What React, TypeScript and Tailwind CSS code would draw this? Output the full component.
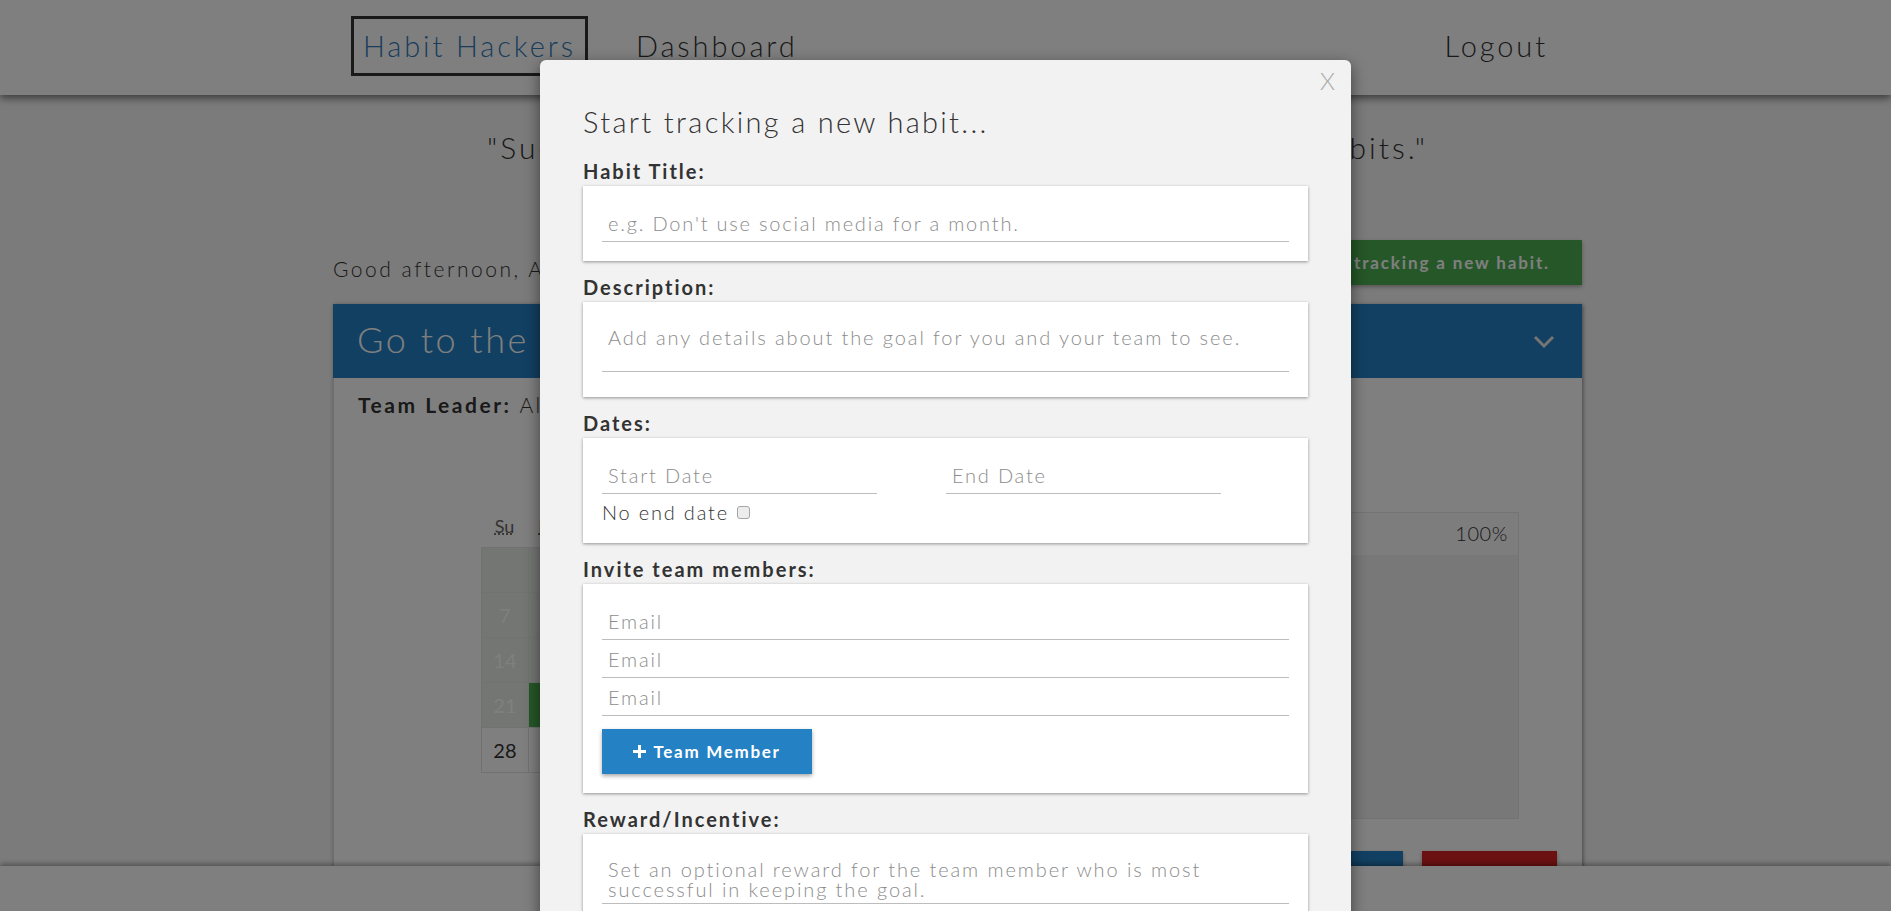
const weeks: (number | null)[][] = [
  [null, 1, 2, 3, 4, 5, 6],
  [7, 8, 9, 10, 11, 12, 13],
  [14, 15, 16, 17, 18, 19, 20],
  [21, 22, 23, 24, 25, 26, 27],
  [28, 29, 30, 31, null, null, null],
];
const weekdays = ["Su", "Mo", "Tu", "We", "Th", "Fr", "Sa"];
const doneDays = [22];
const today = 28;

function Calendar() {
  return (
    <div className="w-[329px] pt-[3px]">
      <div className="grid grid-cols-7 text-[18px] leading-[22px] text-[#666]">
        {weekdays.map((day) => (
          <div key={day} className="text-center">
            <abbr className="underline decoration-dotted">{day}</abbr>
          </div>
        ))}
      </div>
      <div className="mt-[10px] grid grid-cols-7 border-l border-t border-[#e2e2e2]">
        {weeks.flat().map((day, i) => {
          const past = day === null || day < today;
          const done = day !== null && doneDays.includes(day);
          return (
            <div
              key={i}
              className={
                done
                  ? "flex h-[45px] items-center justify-center border-b border-r border-[#e2e2e2] bg-[#4caf50] text-[20px] text-white"
                  : past
                    ? "flex h-[45px] items-center justify-center border-b border-r border-[#e2e6e2] bg-[#e8ece8] text-[20px] text-white"
                    : "flex h-[45px] items-center justify-center border-b border-r border-[#e2e2e2] bg-white text-[20px] text-[#333]"
              }
            >
              {day}
            </div>
          );
        })}
      </div>
    </div>
  );
}

function Label({ children, first }: { children: string; first?: boolean }) {
  return (
    <div className={`${first ? "mt-[19px]" : "mt-[14px]"} mb-[3px] text-[20px] font-bold leading-[24px] tracking-[0.1em] text-[#333]`}>
      {children}
    </div>
  );
}

function Card({ children, className = "" }: { children: React.ReactNode; className?: string }) {
  return <div className={`bg-white px-[19px] shadow-[0_1px_3px_rgba(0,0,0,0.4)] ${className}`}>{children}</div>;
}

const inputClass =
  "block h-[38px] w-full border-b border-[#bdbdbd] bg-transparent pl-[6px] text-[20px] font-light tracking-[0.09em] text-[#333] outline-none placeholder:text-[#8c8c8c]";
const areaClass =
  "block h-[52px] w-full resize-none border-b border-[#bdbdbd] bg-transparent pl-[6px] pt-[7px] text-[20px] font-light leading-[20px] tracking-[0.095em] text-[#333] outline-none placeholder:text-[#8c8c8c]";

export default function App() {
  return (
    <div className="relative h-[911px] overflow-hidden bg-[#f6f6f6] font-['Lato',sans-serif] text-[#333]">
      <header className="relative z-10 flex h-[95px] items-center bg-white pb-[4px] pl-[351px] pr-[343px] shadow-[0_3px_8px_rgba(0,0,0,0.55)]">
        <a className="flex h-[60px] items-center border-[3px] border-[#333] px-[9px] text-[29px] font-light tracking-[0.1em] text-[#337ab7]">
          Habit Hackers
        </a>
        <a className="ml-[48px] text-[29px] font-light tracking-[0.1em]">Dashboard</a>
        <a className="ml-auto text-[29px] font-light tracking-[0.1em]">Logout</a>
      </header>

      <main className="ml-[333px] w-[1249px]">
        <p className="mt-[34px] text-center text-[30px] font-light leading-[36px] tracking-[0.1em]">
          "Successful people are simply those with successful habits."
        </p>

        <div className="mt-[75px] flex items-end justify-between">
          <p className="pb-[4px] text-[21px] font-light leading-[24px] tracking-[0.12em]">Good afternoon, Alex!</p>
          <button className="h-[45px] bg-[#4caf50] px-[32px] text-[17px] font-bold tracking-[0.11em] text-white shadow-[0_2px_4px_rgba(0,0,0,0.3)]">
            Start tracking a new habit.
          </button>
        </div>

        <section className="mt-[19px] shadow-[1px_1px_4px_rgba(0,0,0,0.45)]">
          <div className="flex h-[74px] items-center justify-between bg-[#2481c4] pb-[4px] pl-[24px] pr-[27px]">
            <h2 className="text-[36px] font-light leading-[44px] tracking-[0.07em] text-white">Go to the gym every day</h2>
            <svg width="22" height="13" viewBox="0 0 22 13" fill="none" className="mt-[4px]">
              <polyline points="2,2 11,11 20,2" stroke="#e8e8e8" strokeWidth="3" />
            </svg>
          </div>
          <div className="h-[520px] border-l border-[#dcdcdc] bg-white pl-[24px] pr-[63px] pt-[15px]">
            <p className="text-[21px] leading-[24px] tracking-[0.12em]">
              <span className="font-bold">Team Leader:</span> <span className="font-light">Alex</span>
            </p>
            <div className="mt-[95px] flex items-start justify-between pl-[123px]">
              <Calendar />
              <div className="w-[479px] border border-[#e6e6e6]">
                <div className="flex h-[42px] items-center justify-end bg-[#fbfbfb] pb-[2px] pr-[10px] text-[20px] font-light tracking-[0.03em]">
                  100%
                </div>
                <div className="h-[263px] bg-[#f0f0f0]" />
              </div>
            </div>
            <div className="mt-[32px] flex justify-end gap-[19px]">
              <button className="h-[45px] w-[135px] bg-[#2481c4] text-[17px] font-bold text-white shadow-[0_2px_4px_rgba(0,0,0,0.3)]">
                Edit
              </button>
              <button className="mr-[-38px] h-[45px] w-[135px] bg-[#d72222] text-[17px] font-bold text-white shadow-[0_2px_4px_rgba(0,0,0,0.3)]">
                Delete
              </button>
            </div>
          </div>
        </section>
      </main>

      <footer className="absolute bottom-0 left-0 right-0 z-10 h-[45px] bg-white shadow-[0_-2px_5px_rgba(0,0,0,0.35)]" />

      <div className="absolute inset-0 z-20 flex justify-center bg-black/50">
        <div className="relative mt-[60px] h-[1100px] w-[811px] rounded-t-[6px] bg-[#f2f2f2] px-[43px] pt-[44px] shadow-[0_5px_15px_rgba(0,0,0,0.5)]">
          <button className="absolute right-[16px] top-[9px] text-[24px] font-light leading-[24px] text-[#aaa]">X</button>
          <h3 className="text-[29px] font-light leading-[36px] tracking-[0.08em] text-[#333]">Start tracking a new habit...</h3>

          <Label first>Habit Title:</Label>
          <Card className="pb-[19px] pt-[18px]">
            <input className={inputClass} placeholder="e.g. Don't use social media for a month." />
          </Card>

          <Label>Description:</Label>
          <Card className="pb-[25px] pt-[18px]">
            <textarea className={areaClass} placeholder="Add any details about the goal for you and your team to see." />
          </Card>

          <Label>Dates:</Label>
          <Card className="pb-[19px] pt-[18px]">
            <div className="flex gap-[69px]">
              <input className={`${inputClass} !w-[275px]`} placeholder="Start Date" />
              <input className={`${inputClass} !w-[275px]`} placeholder="End Date" />
            </div>
            <label className="mt-[6px] flex h-[24px] items-center text-[20px] font-light tracking-[0.09em] text-[#333]">
              No end date
              <input
                type="checkbox"
                className="ml-[8px] h-[13px] w-[13px] appearance-none rounded-[3px] border border-[#a5a5a5] bg-[#ededed]"
              />
            </label>
          </Card>

          <Label>Invite team members:</Label>
          <Card className="pb-[19px] pt-[18px]">
            <input className={inputClass} placeholder="Email" />
            <input className={inputClass} placeholder="Email" />
            <input className={inputClass} placeholder="Email" />
            <button className="mt-[13px] flex h-[45px] w-[210px] items-center justify-center gap-[7px] bg-[#2481c4] text-[17px] font-bold tracking-[0.1em] text-white shadow-[0_2px_4px_rgba(0,0,0,0.35)]">
              <svg width="13" height="13" viewBox="0 0 13 13" fill="white">
                <path d="M5 0h3v5h5v3H8v5H5V8H0V5h5z" />
              </svg>
              Team Member
            </button>
          </Card>

          <Label>Reward/Incentive:</Label>
          <Card className="pb-[25px] pt-[18px]">
            <textarea
              className={areaClass}
              placeholder="Set an optional reward for the team member who is most successful in keeping the goal."
            />
          </Card>
        </div>
      </div>
    </div>
  );
}
